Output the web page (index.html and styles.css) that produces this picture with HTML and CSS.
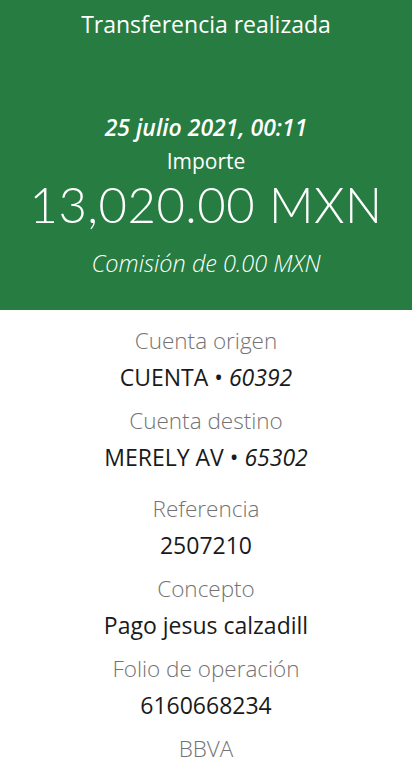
FILE: index.html
```html
<!DOCTYPE html>
<html lang="es">
<head>
<meta charset="UTF-8" />
<meta name="viewport" content="width=device-width, initial-scale=1" />
<title>Transferencia realizada</title>
<link rel="stylesheet" href="styles.css">
</head>
<body>

<header class="summary">
  <h1 class="title">Transferencia realizada</h1>
  <p class="date">25 julio 2021, 00:11</p>
  <p class="amount-label">Importe</p>
  <p class="amount">13,020.00 MXN</p>
  <p class="fee">Comisión de 0.00 MXN</p>
</header>

<main class="details">
  <div class="item">
    <p class="label">Cuenta origen</p>
    <p class="value">CUENTA &bull; <em>60392</em></p>
  </div>
  <div class="item">
    <p class="label">Cuenta destino</p>
    <p class="value">MERELY AV &bull; <em>65302</em></p>
  </div>
  <div class="item item-spaced">
    <p class="label">Referencia</p>
    <p class="value">2507210</p>
  </div>
  <div class="item">
    <p class="label">Concepto</p>
    <p class="value">Pago jesus calzadill</p>
  </div>
  <div class="item">
    <p class="label">Folio de operación</p>
    <p class="value">6160668234</p>
  </div>
  <div class="item">
    <p class="label">BBVA</p>
  </div>
</main>

</body>
</html>
```

FILE: styles.css
```css
body {
  margin: 0;
  font-family: "Open Sans", "Liberation Sans", sans-serif;
  font-weight: 300;
  text-align: center;
  background: #fff;
  overflow: hidden;
}
p, h1 {
  margin: 0;
}
.summary {
  background: #267c41;
  color: #fff;
  padding: 10px 0 29px;
}
.title {
  font-size: 23px;
  font-weight: 400;
  line-height: 28px;
}
.date {
  margin-top: 71px;
  font-size: 23px;
  font-weight: 600;
  font-style: italic;
  line-height: 36px;
}
.amount-label {
  margin-top: 2px;
  font-size: 21px;
  font-weight: 400;
  line-height: 28px;
}
.amount {
  font-family: Lato, "Open Sans", sans-serif;
  font-size: 49px;
  font-weight: 300;
  letter-spacing: 0.5px;
  line-height: 59px;
}
.fee {
  margin-top: 11px;
  font-size: 23.5px;
  font-style: italic;
  line-height: 36px;
}
.details {
  padding-top: 13px;
}
.item + .item {
  margin-top: 8px;
}
.item.item-spaced {
  margin-top: 16px;
}
.label {
  color: #737373;
  font-size: 22.5px;
  line-height: 36px;
}
.value {
  color: #1a1a1a;
  font-size: 23px;
  font-weight: 400;
  line-height: 36px;
}
.value em {
  font-style: italic;
}
```
